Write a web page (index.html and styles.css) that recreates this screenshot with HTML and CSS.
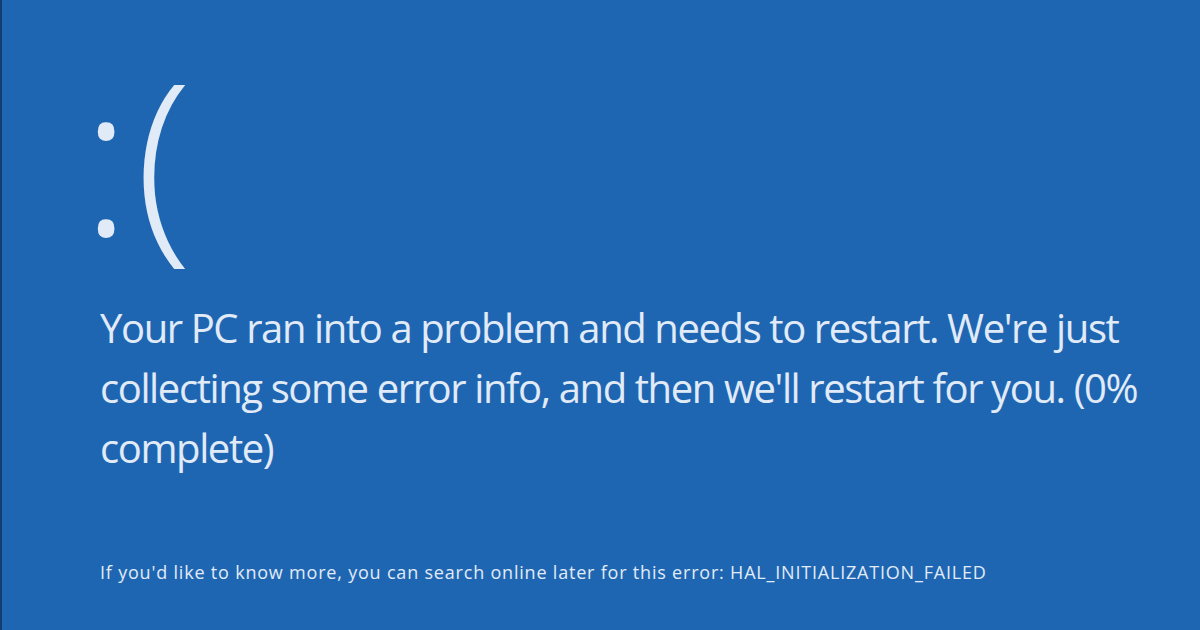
FILE: index.html
```html
<!DOCTYPE html>
<html lang="en">

<head>
    <meta charset="UTF-8">
    <title>Stop Error</title>
    <link rel="stylesheet" href="styles.css">
</head>

<body>
    <div class="screen">
        <div class="face">:(</div>
        <p class="message">Your PC ran into a problem and needs to restart. We're just collecting some error info, and then we'll restart for you. (0% complete)</p>
        <p class="details">If you'd like to know more, you can search online later for this error: HAL_INITIALIZATION_FAILED</p>
    </div>
</body>

</html>
```

FILE: styles.css
```css
* {
    box-sizing: border-box;
}

body {
    margin: 0;
    width: 1200px;
    height: 630px;
    overflow: hidden;
    background-color: #1f66b2;
    color: #e1ebf7;
    font-family: 'Open Sans', 'Noto Sans', sans-serif;
    border-left: 2px solid #123d70;
}

.screen {
    padding: 50px 0 0 98px;
    display: flex;
    flex-direction: column;
}

.face {
    font-size: 210px;
    font-weight: 300;
    line-height: 1;
    height: 210px;
    margin: 0 0 38px -19px;
    letter-spacing: 4px;
}

.message {
    margin: 0;
    width: 1070px;
    font-size: 40px;
    line-height: 60px;
    letter-spacing: -1.4px;
    font-weight: 400;
}

.details {
    margin: 82px 0 0;
    font-size: 18px;
    letter-spacing: 0.8px;
}
```
